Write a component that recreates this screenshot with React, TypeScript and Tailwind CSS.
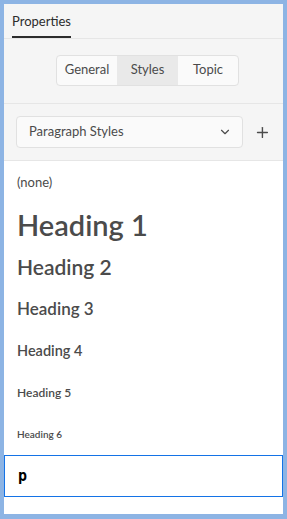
import React from "react";
import { ChevronDown, Plus } from "lucide-react";

const headings = [
  { label: "Heading 1", cls: "text-[29px] font-semibold" },
  { label: "Heading 2", cls: "text-[21px] font-semibold" },
  { label: "Heading 3", cls: "text-[17px] font-semibold" },
  { label: "Heading 4", cls: "text-[14.5px] font-semibold" },
  { label: "Heading 5", cls: "text-[12px] font-semibold" },
  { label: "Heading 6", cls: "text-[10px] font-semibold" },
];

export default function App() {
  return (
    <div
      className="w-[287px] h-[519px] bg-[#8db4e4] pt-[4px] pl-[4px] pr-[4px] pb-[5px]"
      style={{ fontFamily: "Lato, 'Open Sans', sans-serif" }}
    >
      <div className="h-full bg-white flex flex-col">
        {/* tab header */}
        <div className="bg-[#f5f5f5] h-[35px] border-b border-[#e6e6e6] px-[8px] flex items-end">
          <div className="h-full flex flex-col justify-end">
            <span className="text-[13px] text-[#2c2c2c] leading-none pb-[8px]">Properties</span>
            <div className="h-[2px] bg-[#2c2c2c]" />
          </div>
        </div>

        {/* segmented */}
        <div className="bg-[#f5f5f5] h-[65px] border-b border-[#e6e6e6] flex items-center pl-[52px] pb-[2px]">
          <div className="flex h-[31px] border border-[#e1e1e1] rounded-[4px] bg-[#fafafa] text-[13px] text-[#4b4b4b] overflow-hidden">
            <div className="w-[60px] flex items-center justify-center">General</div>
            <div className="w-[61px] flex items-center justify-center bg-[#e9e9e9]">Styles</div>
            <div className="w-[60px] flex items-center justify-center">Topic</div>
          </div>
        </div>

        {/* dropdown */}
        <div className="bg-[#f5f5f5] h-[57px] border-b border-[#e6e6e6] flex items-center pl-[12px] pr-[12px] gap-[11px]">
          <div className="w-[229px] h-[32px] border border-[#e1e1e1] rounded-[4px] bg-[#fafafa] flex items-center justify-between pl-[12px] pr-[10px]">
            <span className="text-[13px] text-[#4b4b4b]">Paragraph Styles</span>
            <ChevronDown size={14} strokeWidth={2} className="text-[#4b4b4b]" />
          </div>
          <Plus size={17} strokeWidth={2} className="text-[#4b4b4b]" />
        </div>

        {/* list */}
        <div className="flex flex-col text-[#4b4b4b]">
          <div className="h-[42px] flex items-center pl-[13px] pt-[2px] text-[13px]">(none)</div>
          {headings.map((h) => (
            <div key={h.label} className={`h-[42px] flex items-center pl-[13px] pt-[1px] ${h.cls}`}>
              {h.label}
            </div>
          ))}
          <div className="h-[42px] flex items-center pl-[13px] border border-[#1473e6] text-black text-[15px] font-bold">
            <span style={{ fontFamily: "'DejaVu Sans Mono', monospace" }}>p</span>
          </div>
        </div>
      </div>
    </div>
  );
}
